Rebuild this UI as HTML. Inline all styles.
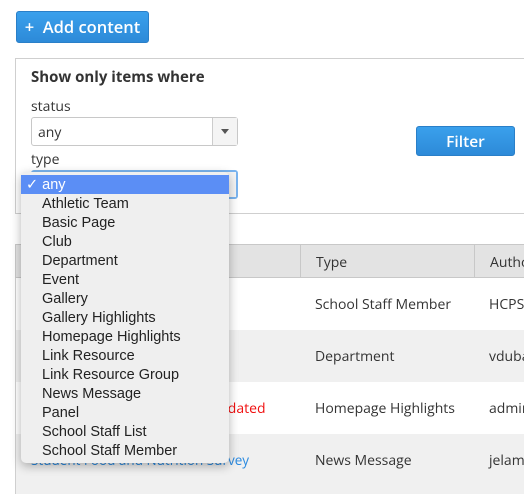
<!DOCTYPE html>
<html><head><style>
*{box-sizing:border-box;margin:0;padding:0}
body{width:524px;height:484px;overflow:hidden;background:#fff;font-family:"Open Sans","DejaVu Sans","Liberation Sans",sans-serif;color:#333;position:relative}
.abs{position:absolute}
.btn{background:linear-gradient(#3aa0ec,#2d8ad8);border:1px solid #2a7fc8;border-radius:3px;color:#fff;text-align:center;font-weight:600}
.panel{left:15px;top:58px;width:520px;height:156px;border:1px solid #cfcfcf;border-right:none}
.sel{left:31px;width:207px;height:29px;border:1px solid #c8c8c8;border-radius:3px;background:#fff;font-size:14px;padding:5px 0 0 6px}
.arr{position:absolute;right:0;top:0;width:25px;height:27px;border-left:1px solid #ccc;background:#f4f4f4}
.arr:after{content:"";position:absolute;left:8px;top:11px;border:4px solid transparent;border-top:5px solid #555}
.row{left:15px;width:520px;height:52px;font-size:14px;border-left:1px solid #cfcfcf}
.row span{position:absolute;top:17px}
.dd{left:21px;top:172px;width:208px;height:291px;background:#efefef;border-radius:5px;box-shadow:0 3px 10px rgba(0,0,0,.3);font-family:"Liberation Sans",sans-serif;font-size:14.5px;color:#222;padding-top:3px}
.dd div{height:19px;line-height:21px;padding-left:21px}
.dd .hi{background:#5b8ef5;color:#fff;padding-left:5px}
</style></head><body>
<div class="abs btn" style="left:16px;top:11px;width:133px;height:32px;font-size:16.5px;line-height:30px">+&nbsp; Add content</div>
<div class="abs panel"></div>
<div class="abs" style="left:31px;top:67px;font-size:15px;font-weight:bold">Show only items where</div>
<div class="abs" style="left:31px;top:97px;font-size:14px">status</div>
<div class="abs sel" style="top:117px">any<div class="arr"></div></div>
<div class="abs" style="left:31px;top:150px;font-size:14px">type</div>
<div class="abs sel" style="top:170px;border:2px solid #7ab4ef"><div class="arr" style="top:0;height:25px"></div></div>
<div class="abs btn" style="left:416px;top:126px;width:99px;height:30px;font-size:15.5px;line-height:28px">Filter</div>
<div class="abs" style="left:15px;top:244px;width:520px;height:34px;background:#e3e3e3;border:1px solid #c8c8c8;font-size:14px">
<div class="abs" style="left:284px;top:0;height:32px;border-left:1px solid #c8c8c8"></div>
<div class="abs" style="left:458px;top:0;height:32px;border-left:1px solid #c8c8c8"></div>
<span class="abs" style="left:300px;top:8px">Type</span><span class="abs" style="left:474px;top:8px">Author</span></div>
<div class="abs row" style="top:278px;background:#fff"><span style="left:299px">School Staff Member</span><span style="left:473px">HCPS</span></div>
<div class="abs row" style="top:330px;background:#f0f0f0"><span style="left:299px">Department</span><span style="left:473px">vduba</span></div>
<div class="abs row" style="top:382px;background:#fff"><span style="left:193px;color:#f01010">Updated</span><span style="left:299px">Homepage Highlights</span><span style="left:473px">admin</span></div>
<div class="abs row" style="top:434px;background:#f0f0f0;height:60px"><span style="left:15px;color:#2a8ae0;font-size:13.5px">Student Food and Nutrition Survey</span><span style="left:299px">News Message</span><span style="left:473px">jelam</span></div>
<div class="abs dd">
<div class="hi">✓ any</div><div>Athletic Team</div><div>Basic Page</div><div>Club</div><div>Department</div><div>Event</div><div>Gallery</div><div>Gallery Highlights</div><div>Homepage Highlights</div><div>Link Resource</div><div>Link Resource Group</div><div>News Message</div><div>Panel</div><div>School Staff List</div><div>School Staff Member</div>
</div>
</body></html>
